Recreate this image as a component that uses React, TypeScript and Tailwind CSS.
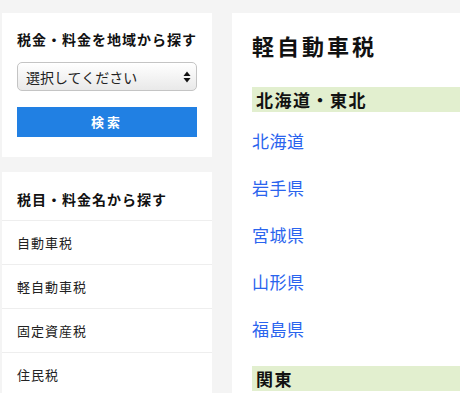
const font = { fontFamily: '"Noto Sans CJK JP", "Noto Sans", sans-serif' };

const taxItems = ["自動車税", "軽自動車税", "固定資産税", "住民税"];
const prefectures = ["北海道", "岩手県", "宮城県", "山形県", "福島県"];

const SelectBox = () => (
    <div className="mt-[13px] flex h-[29px] items-center justify-between rounded-[5px] border border-[#c4c4c4] bg-gradient-to-b from-white to-[#e9e9e9] pl-[8px] pr-[5px] shadow-[inset_0_1px_0_#fff]">
        <span className="text-[14px] leading-none text-[#222]">選択してください</span>
        <svg width="8" height="12" viewBox="0 0 8 12">
            <path d="M4 0.5 L7.5 5 L0.5 5 Z" fill="#111" />
            <path d="M4 11.5 L7.5 7 L0.5 7 Z" fill="#111" />
        </svg>
    </div>
);

export default function App() {
    return (
        <div style={font} className="h-[393px] w-[460px] overflow-hidden bg-[#f4f4f4]">
            <div className="flex items-start gap-[20px] pl-[2px] pt-[13px]">
                <aside className="flex w-[210px] shrink-0 flex-col gap-[15px]">
                    <section className="bg-white px-[15px] pb-[20px] pt-[16px]">
                        <h3 className="text-[14px] font-bold leading-[20px] tracking-[1px] text-[#111]">税金・料金を地域から探す</h3>
                        <SelectBox />
                        <button className="mt-[16px] flex h-[30px] w-full items-center justify-center bg-[#2180e3] text-[13px] font-bold tracking-[3px] text-white">
                            検索
                        </button>
                    </section>
                    <section className="bg-white">
                        <h3 className="px-[15px] pb-[11px] pt-[17px] text-[14px] font-bold leading-[20px] tracking-[1px] text-[#111]">税目・料金名から探す</h3>
                        <ul>
                            {taxItems.map((item) => (
                                <li key={item} className="flex h-[44px] items-center border-t border-[#eeeeee] px-[15px] text-[13px] tracking-[1px] text-[#222]">
                                    {item}
                                </li>
                            ))}
                        </ul>
                    </section>
                </aside>
                <main className="h-[400px] w-[400px] shrink-0 bg-white pl-[20px] pt-[16px]">
                    <h1 className="text-[22px] font-bold leading-[32px] tracking-[3px] text-[#111]">軽自動車税</h1>
                    <h2 className="mt-[26px] flex h-[25px] items-center bg-[#e2efcf] pl-[4px] text-[17px] font-bold tracking-[1.5px] text-[#111]">北海道・東北</h2>
                    <div className="flex flex-col gap-[20px] pt-[15px]">
                        {prefectures.map((p) => (
                            <a key={p} href="#" className="text-[17px] leading-[27px] tracking-[0.5px] text-[#2a64ee]">
                                {p}
                            </a>
                        ))}
                    </div>
                    <h2 className="mt-[24px] flex h-[25px] items-center bg-[#e2efcf] pl-[4px] text-[17px] font-bold tracking-[1.5px] text-[#111]">関東</h2>
                </main>
            </div>
        </div>
    );
}
